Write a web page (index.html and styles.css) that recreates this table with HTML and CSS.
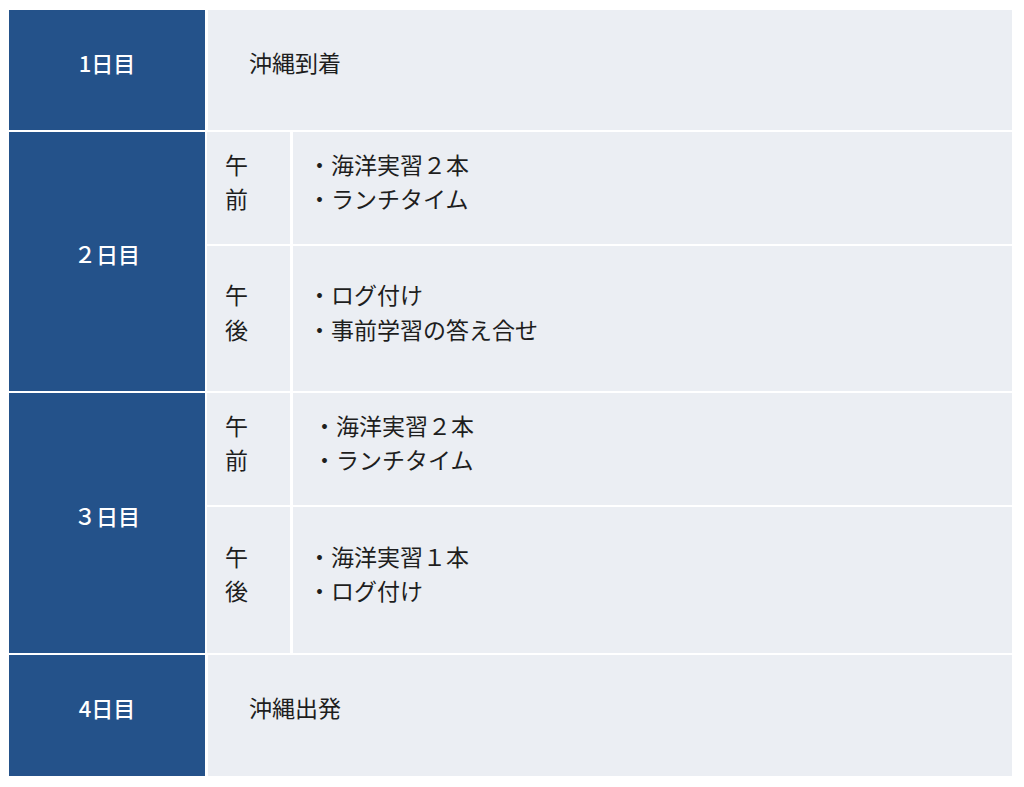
FILE: index.html
```html
<!DOCTYPE html>
<html lang="ja">
<head>
<meta charset="utf-8">
<title>スケジュール</title>
<link rel="stylesheet" href="styles.css">
</head>
<body>
<div class="schedule">
  <div class="day">1日目</div>
  <div class="cell plain wide">沖縄到着</div>

  <div class="day r2">２日目</div>
  <div class="cell half">午<br>前</div>
  <div class="cell items"><p>・海洋実習２本</p><p>・ランチタイム</p></div>
  <div class="cell half">午<br>後</div>
  <div class="cell items"><p>・ログ付け</p><p>・事前学習の答え合せ</p></div>

  <div class="day r3">３日目</div>
  <div class="cell half">午<br>前</div>
  <div class="cell items shifted"><p>・海洋実習２本</p><p>・ランチタイム</p></div>
  <div class="cell half">午<br>後</div>
  <div class="cell items"><p>・海洋実習１本</p><p>・ログ付け</p></div>

  <div class="day">4日目</div>
  <div class="cell plain wide">沖縄出発</div>
</div>
</body>
</html>
```

FILE: styles.css
```css
html, body {
  margin: 0;
  padding: 0;
  background: #ffffff;
}

body {
  font-family: "Noto Sans CJK JP", "Noto Sans", sans-serif;
  font-size: 23px;
  color: #1e1e1e;
}

.schedule {
  display: grid;
  grid-template-columns: 195px 83px 719px;
  grid-template-rows: 120px 112px 145px 112px 146px 121px;
  column-gap: 3px;
  row-gap: 2px;
  padding: 10px 0 0 9px;
}

.day {
  background: #24528a;
  color: #ffffff;
  grid-column: 1;
  display: flex;
  align-items: center;
  justify-content: center;
  padding-bottom: 16px;
  margin-right: -1px;
  font-size: 22px;
  font-weight: 500;
  line-height: 35px;
  box-sizing: border-box;
}

.day.r2 { grid-row: 2 / span 2; }
.day.r3 { grid-row: 4 / span 2; }

.cell {
  background: #ebeef3;
  display: flex;
  flex-direction: column;
  justify-content: center;
  padding-bottom: 14px;
  line-height: 34.5px;
  box-sizing: border-box;
}

.wide {
  grid-column: 2 / span 2;
  margin-left: 1px;
  padding-left: 41px;
  padding-bottom: 16px;
}

.half {
  padding-left: 18px;
}

.items {
  padding-left: 15px;
}

.items.shifted {
  padding-left: 20px;
}

.items p {
  margin: 0;
}
```
